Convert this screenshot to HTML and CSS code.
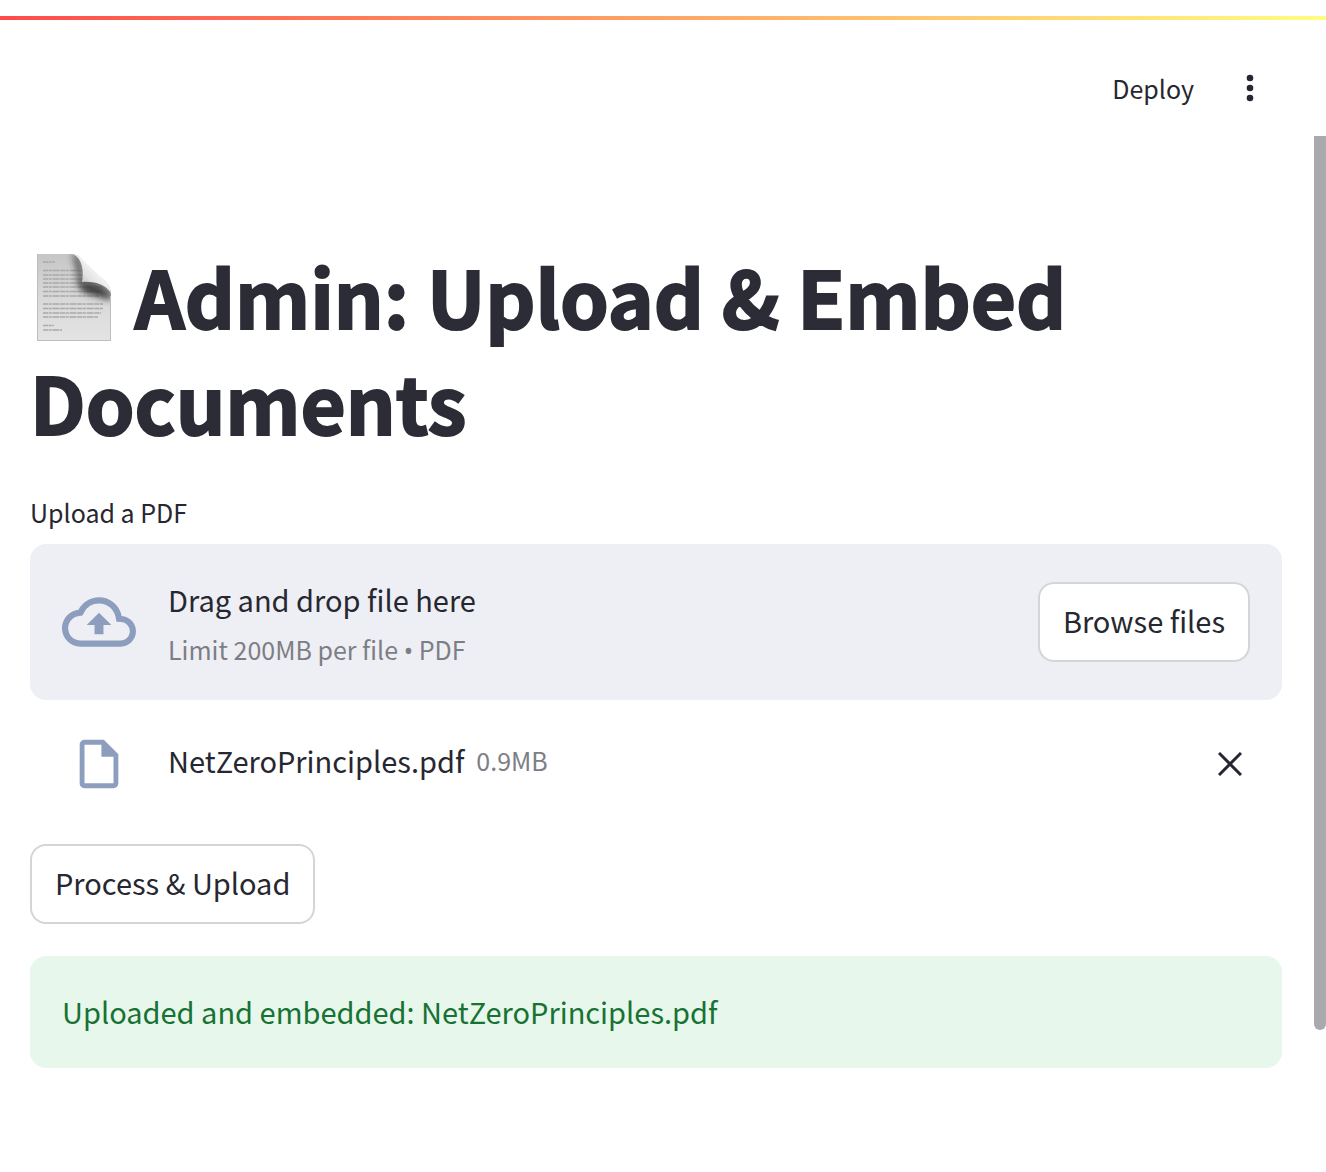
FILE: index.html
```html
<!DOCTYPE html>
<html lang="en">
<head>
<meta charset="utf-8">
<title>Admin: Upload &amp; Embed Documents</title>
<link rel="stylesheet" href="styles.css">
</head>
<body>
<div class="decoration"></div>
<header class="toolbar">
  <button class="deploy" type="button">Deploy</button>
  <button class="menu" type="button" aria-label="Main menu">
    <svg width="8" height="28" viewBox="0 0 8 28" fill="currentColor"><circle cx="4" cy="4" r="3.3"/><circle cx="4" cy="14" r="3.3"/><circle cx="4" cy="24" r="3.3"/></svg>
  </button>
</header>
<div class="viewport">
<main class="content">
  <h1 class="title">
    <svg class="page-icon" viewBox="0 0 74 87" aria-hidden="true">
      <defs>
        <linearGradient id="sheet" x1="0" y1="0" x2="0" y2="1"><stop offset="0" stop-color="#c6c6c6"/><stop offset=".5" stop-color="#d8d8d8"/><stop offset="1" stop-color="#e4e4e4"/></linearGradient>
        <linearGradient id="curl" gradientUnits="userSpaceOnUse" x1="45" y1="28" x2="59" y2="15"><stop offset="0" stop-color="#c8c8c8"/><stop offset=".4" stop-color="#e2e2e2"/><stop offset="1" stop-color="#f6f6f6"/></linearGradient>
        <filter id="soft" x="-50%" y="-50%" width="200%" height="200%"><feGaussianBlur stdDeviation="3.5"/></filter>
        <clipPath id="edge"><path d="M0 0H34C43 0 46 8 51 12L68 27C72 31 74 35 74 42V87H0Z"/></clipPath>
      </defs>
      <g clip-path="url(#edge)">
        <path d="M0 0H74V87H0Z" fill="url(#sheet)"/>
        <g stroke="#a9a9a9" stroke-width="1.500" stroke-dasharray="5 .6 3 .8 7 .7">
          <path d="M6 8H18M6 16.500H46M6 21H46M6 25H46M6 29H60M6 33H65M6 37.500H64M6 42H62M6 50H66M6 54.500H66M6 59H64M6 63H61M6 71.500H17M6 76H25"/>
        </g>
        <path d="M36 0C43 6 44 16 45 28C57 28 68 31 74 43V46L46 38Q42 32 42 20Z" fill="#333" filter="url(#soft)"/>
        <path d="M38 -2C43 6 43 16 44 30C57 29 68 33 76 42" fill="none" stroke="#555" stroke-width="4" filter="url(#soft)"/>
        <path d="M.5 0V86.500H73.500V42" fill="none" stroke="#bdbdbd"/>
      </g>
      <path d="M36 0C42 1 46 6 50 10L68 27C72 31 73 34 74 39C68 30 58 27 45 28C47 18 46 5 36 0Z" fill="url(#curl)"/>
    </svg>
    Admin: Upload &amp; Embed Documents
  </h1>
  <label class="label" for="browse">Upload a PDF</label>
  <section class="dropzone">
    <svg class="cloud" width="74" height="74" viewBox="0 0 24 24" fill="currentColor"><path d="M19.35 10.04A7.49 7.49 0 0 0 12 4C9.11 4 6.6 5.64 5.35 8.04A5.994 5.994 0 0 0 0 14c0 3.31 2.69 6 6 6h13c2.76 0 5-2.24 5-5 0-2.64-2.05-4.78-4.65-4.96zM19 18H6c-2.21 0-4-1.79-4-4 0-2.05 1.53-3.76 3.56-3.97l1.07-.11.5-.95A5.469 5.469 0 0 1 12 6c2.62 0 4.88 1.86 5.39 4.43l.3 1.5 1.53.11A2.98 2.98 0 0 1 22 15c0 1.65-1.35 3-3 3zM8 13h2.55v3h2.9v-3H16l-4-4z"/></svg>
    <div class="hint">
      <span class="text">Drag and drop file here</span>
      <span class="small">Limit 200MB per file <span class="bullet">•</span> PDF</span>
    </div>
    <button class="button" id="browse" type="button">Browse files</button>
  </section>
  <div class="file">
    <svg class="doc" width="58" height="58" viewBox="0 0 24 24" fill="currentColor"><path d="M14 2H6c-1.100 0-1.990.9-1.990 2L4 20c0 1.100.89 2 1.990 2H18c1.100 0 2-.9 2-2V8l-6-6zM6 20V4h7v5h5v11H6z"/></svg>
    <div class="file-name">
      <span class="text">NetZeroPrinciples.pdf</span>
      <span class="small">0.9MB</span>
    </div>
    <button class="remove" type="button" aria-label="Remove file"><svg width="24" height="24" viewBox="0 0 24 24" stroke="currentColor" stroke-width="3"><path d="M1 1L23 23M23 1L1 23"/></svg></button>
  </div>
  <button class="button" type="button">Process &amp; Upload</button>
  <div class="success" role="status">Uploaded and embedded: NetZeroPrinciples.pdf</div>
</main>
<div class="scrollbar"></div>
</div>
</body>
</html>
```

FILE: styles.css
```css
* { box-sizing: border-box; }
body {
  margin: 0;
  padding-top: 16px;
  background: #fff;
  color: #262730;
  font: 29px/48px "Noto Sans CJK SC", "Noto Sans", sans-serif;
}
svg { display: block; flex: none; }
button { font: inherit; color: inherit; border: 0; padding: 0; background: none; }
.decoration { height: 4px; background: linear-gradient(90deg, #ff4b4b, #fffd80); }
.toolbar {
  display: flex;
  justify-content: flex-end;
  align-items: center;
  gap: 52px;
  height: 116px;
  padding: 20px 72px 0 0;
}
.deploy { font-size: 25px; }
.viewport { display: flex; align-items: flex-start; }
.content { flex: 1; min-width: 0; padding: 106px 32px 0 30px; }
.title { margin: 0 0 38px; font-size: 78px; line-height: 106px; font-weight: 700; color: #2b2c36; -webkit-text-stroke: 2px #2b2c36; }
.page-icon { display: inline-block; width: 74px; height: 87px; vertical-align: -12px; margin: 0 6px 0 7px; }
.label { display: block; font-size: 25px; line-height: 40px; margin-bottom: 12px; }
.small { font-size: 25px; line-height: 40px; color: #7d7e85; }
.bullet { font-family: "Noto Sans", sans-serif; }
.dropzone {
  display: flex;
  align-items: center;
  gap: 32px;
  height: 156px;
  padding: 0 32px;
  background: #eeeff4;
  border-radius: 16px;
}
.cloud, .doc { color: #8c9dbd; }
.hint { display: flex; flex-direction: column; gap: 6px; flex: 1; }
.button { height: 80px; padding: 0 23px 4px; background: #fff; border: 2px solid #d4d5d8; border-radius: 16px; }
.file { display: flex; align-items: center; gap: 40px; height: 112px; margin: 8px 40px 24px; }
.file-name { display: flex; align-items: center; gap: 12px; padding-bottom: 8px; }
.remove { margin-left: auto; }
.success { margin-top: 32px; padding: 31px 32px 33px; background: #e8f7ec; color: #177233; border-radius: 16px; }
.scrollbar { width: 12px; height: 894px; background: #a9aaad; border-radius: 0 0 6px 6px; }
```
